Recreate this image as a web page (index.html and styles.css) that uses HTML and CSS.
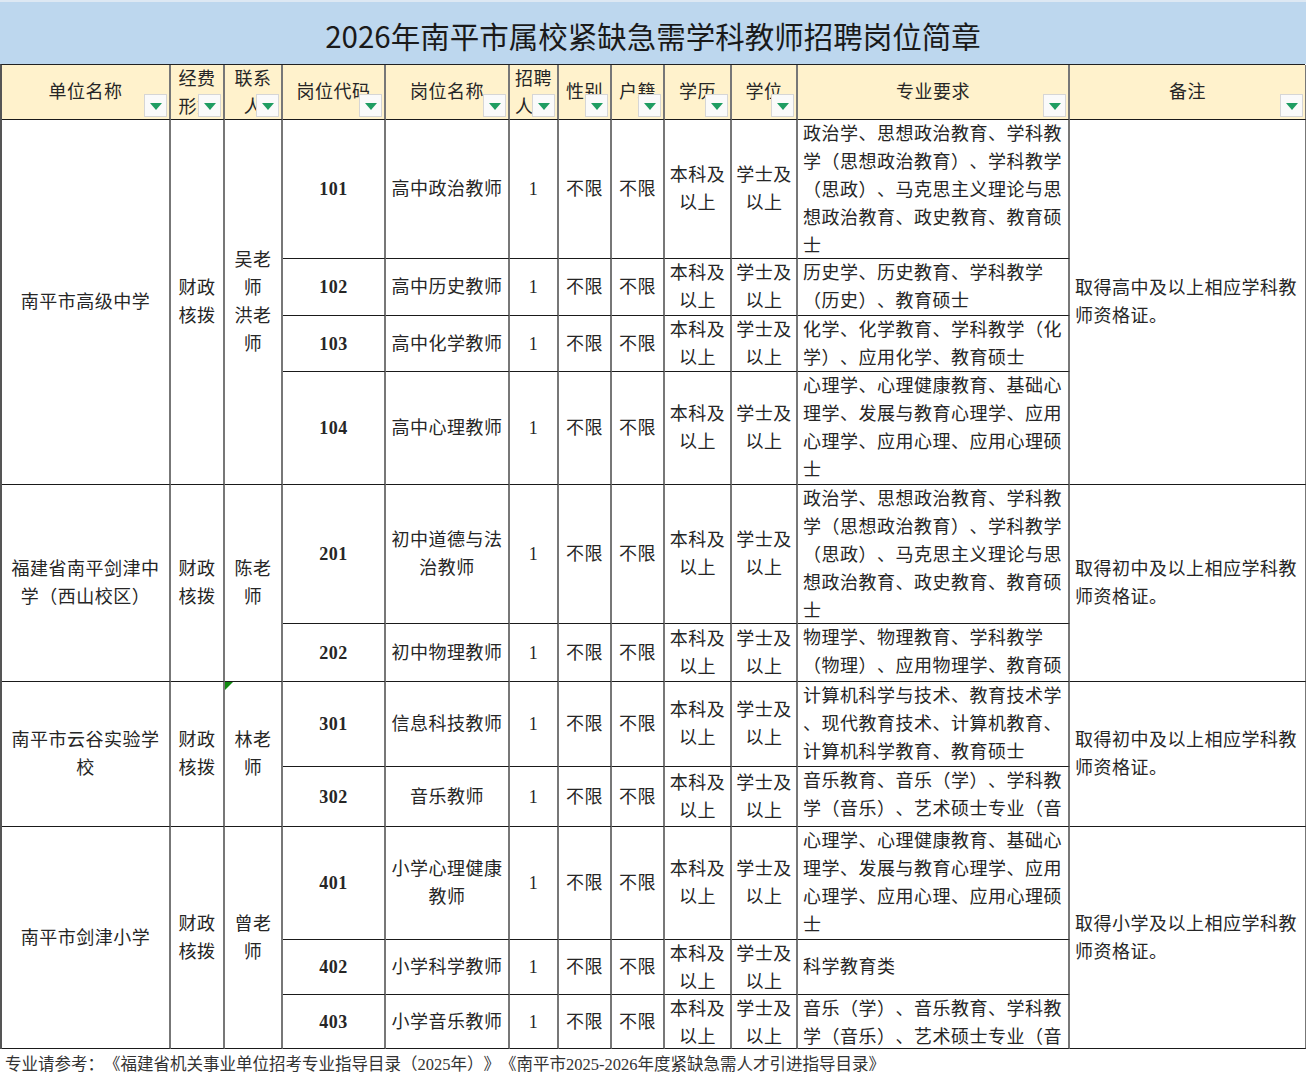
FILE: index.html
```html
<!DOCTYPE html>
<html lang="zh-CN">
<head>
<meta charset="utf-8">
<title>2026年南平市属校紧缺急需学科教师招聘岗位简章</title>
<link rel="stylesheet" href="styles.css">
</head>
<body>
<div class="sheet">
  <div class="title">2026年南平市属校紧缺急需学科教师招聘岗位简章</div>
  <div class="grid">
    <div class="c h"><span class="t">单位名称</span><i class="dd"></i></div>
    <div class="c h"><span class="t">经费形式</span><i class="dd"></i></div>
    <div class="c h"><span class="t">联系人</span><i class="dd"></i></div>
    <div class="c h"><span class="t">岗位代码</span><i class="dd"></i></div>
    <div class="c h"><span class="t">岗位名称</span><i class="dd"></i></div>
    <div class="c h"><span class="t">招聘人数</span><i class="dd"></i></div>
    <div class="c h"><span class="t">性别</span><i class="dd"></i></div>
    <div class="c h"><span class="t">户籍</span><i class="dd"></i></div>
    <div class="c h"><span class="t">学历</span><i class="dd"></i></div>
    <div class="c h"><span class="t">学位</span><i class="dd"></i></div>
    <div class="c h"><span class="t">专业要求</span><i class="dd"></i></div>
    <div class="c h"><span class="t">备注</span><i class="dd"></i></div>

    <!-- 南平市高级中学 -->
    <div class="c s4"><span class="t">南平市高级中学</span></div>
    <div class="c s4"><span class="t">财政核拨</span></div>
    <div class="c s4"><span class="t">吴老<br>师<br>洪老<br>师</span></div>
    <div class="c code"><span class="t">101</span></div>
    <div class="c"><span class="t">高中政治教师</span></div>
    <div class="c"><span class="t">1</span></div>
    <div class="c"><span class="t">不限</span></div>
    <div class="c"><span class="t">不限</span></div>
    <div class="c"><span class="t">本科及以上</span></div>
    <div class="c"><span class="t">学士及以上</span></div>
    <div class="c l"><span class="t">政治学、思想政治教育、学科教<br>学（思想政治教育）、学科教学<br>（思政）、马克思主义理论与思<br>想政治教育、政史教育、教育硕<br>士</span></div>
    <div class="c l s4"><span class="t">取得高中及以上相应学科教师资格证。</span></div>

    <div class="c code"><span class="t">102</span></div>
    <div class="c"><span class="t">高中历史教师</span></div>
    <div class="c"><span class="t">1</span></div>
    <div class="c"><span class="t">不限</span></div>
    <div class="c"><span class="t">不限</span></div>
    <div class="c"><span class="t">本科及以上</span></div>
    <div class="c"><span class="t">学士及以上</span></div>
    <div class="c l"><span class="t">历史学、历史教育、学科教学<br>（历史）、教育硕士</span></div>

    <div class="c code"><span class="t">103</span></div>
    <div class="c"><span class="t">高中化学教师</span></div>
    <div class="c"><span class="t">1</span></div>
    <div class="c"><span class="t">不限</span></div>
    <div class="c"><span class="t">不限</span></div>
    <div class="c"><span class="t">本科及以上</span></div>
    <div class="c"><span class="t">学士及以上</span></div>
    <div class="c l"><span class="t">化学、化学教育、学科教学（化<br>学）、应用化学、教育硕士</span></div>

    <div class="c code"><span class="t">104</span></div>
    <div class="c"><span class="t">高中心理教师</span></div>
    <div class="c"><span class="t">1</span></div>
    <div class="c"><span class="t">不限</span></div>
    <div class="c"><span class="t">不限</span></div>
    <div class="c"><span class="t">本科及以上</span></div>
    <div class="c"><span class="t">学士及以上</span></div>
    <div class="c l"><span class="t">心理学、心理健康教育、基础心<br>理学、发展与教育心理学、应用<br>心理学、应用心理、应用心理硕<br>士</span></div>

    <!-- 福建省南平剑津中学（西山校区） -->
    <div class="c s2"><span class="t">福建省南平剑津中学（西山校区）</span></div>
    <div class="c s2"><span class="t">财政核拨</span></div>
    <div class="c s2"><span class="t">陈老师</span></div>
    <div class="c code"><span class="t">201</span></div>
    <div class="c"><span class="t">初中道德与法治教师</span></div>
    <div class="c"><span class="t">1</span></div>
    <div class="c"><span class="t">不限</span></div>
    <div class="c"><span class="t">不限</span></div>
    <div class="c"><span class="t">本科及以上</span></div>
    <div class="c"><span class="t">学士及以上</span></div>
    <div class="c l"><span class="t">政治学、思想政治教育、学科教<br>学（思想政治教育）、学科教学<br>（思政）、马克思主义理论与思<br>想政治教育、政史教育、教育硕<br>士</span></div>
    <div class="c l s2"><span class="t">取得初中及以上相应学科教师资格证。</span></div>

    <div class="c code"><span class="t">202</span></div>
    <div class="c"><span class="t">初中物理教师</span></div>
    <div class="c"><span class="t">1</span></div>
    <div class="c"><span class="t">不限</span></div>
    <div class="c"><span class="t">不限</span></div>
    <div class="c"><span class="t">本科及以上</span></div>
    <div class="c"><span class="t">学士及以上</span></div>
    <div class="c l"><span class="t">物理学、物理教育、学科教学<br>（物理）、应用物理学、教育硕<br>士</span></div>

    <!-- 南平市云谷实验学校 -->
    <div class="c s2"><span class="t">南平市云谷实验学校</span></div>
    <div class="c s2"><span class="t">财政核拨</span></div>
    <div class="c s2 flag"><span class="t">林老师</span><i class="mark"></i></div>
    <div class="c code"><span class="t">301</span></div>
    <div class="c"><span class="t">信息科技教师</span></div>
    <div class="c"><span class="t">1</span></div>
    <div class="c"><span class="t">不限</span></div>
    <div class="c"><span class="t">不限</span></div>
    <div class="c"><span class="t">本科及以上</span></div>
    <div class="c"><span class="t">学士及以上</span></div>
    <div class="c l"><span class="t">计算机科学与技术、教育技术学<br>、现代教育技术、计算机教育、<br>计算机科学教育、教育硕士</span></div>
    <div class="c l s2"><span class="t">取得初中及以上相应学科教师资格证。</span></div>

    <div class="c code"><span class="t">302</span></div>
    <div class="c"><span class="t">音乐教师</span></div>
    <div class="c"><span class="t">1</span></div>
    <div class="c"><span class="t">不限</span></div>
    <div class="c"><span class="t">不限</span></div>
    <div class="c"><span class="t">本科及以上</span></div>
    <div class="c"><span class="t">学士及以上</span></div>
    <div class="c l"><span class="t">音乐教育、音乐（学）、学科教<br>学（音乐）、艺术硕士专业（音<br>乐）、教育硕士</span></div>

    <!-- 南平市剑津小学 -->
    <div class="c s3"><span class="t">南平市剑津小学</span></div>
    <div class="c s3"><span class="t">财政核拨</span></div>
    <div class="c s3"><span class="t">曾老师</span></div>
    <div class="c code"><span class="t">401</span></div>
    <div class="c"><span class="t">小学心理健康教师</span></div>
    <div class="c"><span class="t">1</span></div>
    <div class="c"><span class="t">不限</span></div>
    <div class="c"><span class="t">不限</span></div>
    <div class="c"><span class="t">本科及以上</span></div>
    <div class="c"><span class="t">学士及以上</span></div>
    <div class="c l"><span class="t">心理学、心理健康教育、基础心<br>理学、发展与教育心理学、应用<br>心理学、应用心理、应用心理硕<br>士</span></div>
    <div class="c l s3"><span class="t">取得小学及以上相应学科教师资格证。</span></div>

    <div class="c code"><span class="t">402</span></div>
    <div class="c"><span class="t">小学科学教师</span></div>
    <div class="c"><span class="t">1</span></div>
    <div class="c"><span class="t">不限</span></div>
    <div class="c"><span class="t">不限</span></div>
    <div class="c"><span class="t">本科及以上</span></div>
    <div class="c"><span class="t">学士及以上</span></div>
    <div class="c l"><span class="t">科学教育类</span></div>

    <div class="c code"><span class="t">403</span></div>
    <div class="c"><span class="t">小学音乐教师</span></div>
    <div class="c"><span class="t">1</span></div>
    <div class="c"><span class="t">不限</span></div>
    <div class="c"><span class="t">不限</span></div>
    <div class="c"><span class="t">本科及以上</span></div>
    <div class="c"><span class="t">学士及以上</span></div>
    <div class="c l"><span class="t">音乐（学）、音乐教育、学科教<br>学（音乐）、艺术硕士专业（音<br>乐）、教育硕士</span></div>
  </div>
  <div class="note">专业请参考：《福建省机关事业单位招考专业指导目录（2025年）》《南平市2025-2026年度紧缺急需人才引进指导目录》</div>
</div>
</body>
</html>
```

FILE: styles.css
```css
html, body {
  margin: 0;
  padding: 0;
  background: #ffffff;
}

.sheet {
  width: 1306px;
  font-family: "Liberation Serif", "Noto Sans CJK SC", serif;
  color: #262626;
  text-spacing-trim: space-all;
}

.title {
  box-sizing: border-box;
  height: 64px;
  padding-top: 4px;
  background: #bdd7ee;
  border-top: 2px solid #dde8f3;
  display: flex;
  align-items: center;
  justify-content: center;
  font-family: "Noto Sans CJK SC", sans-serif;
  font-size: 29.5px;
  color: #1a1a1a;
}

.grid {
  display: grid;
  grid-template-columns: 169px 54px 58px 103px 124px 49px 53px 53px 67px 66px 272px 237px;
  grid-template-rows: 55px 139px 57px 56px 113px 139px 58px 85px 60px 113px 55px 54px;
  border-top: 1px solid #222;
  border-left: 2px solid #555;
  width: 1305px;
  box-sizing: border-box;
}

.c {
  box-sizing: border-box;
  border-right: 2px solid #777;
  border-bottom: 1px solid #1a1a1a;
  display: flex;
  flex-direction: column;
  justify-content: safe center;
  overflow: hidden;
  padding: 0 3px;
  font-size: 18px;
  line-height: 28px;
  letter-spacing: 0.5px;
  text-align: center;
  position: relative;
}

.c .t {
  display: block;
}

.h {
  background: #fff2cc;
}

.l {
  text-align: left;
  padding-left: 5px;
  padding-right: 0;
}

.l .t {
  white-space: nowrap;
}

.s2 .t,
.s3 .t,
.s4 .t {
  white-space: normal;
}

.code {
  font-weight: bold;
}

.s2 { grid-row: span 2; }
.s3 { grid-row: span 3; }
.s4 { grid-row: span 4; }

.dd {
  position: absolute;
  right: 2px;
  bottom: 2px;
  width: 23px;
  height: 23px;
  box-sizing: border-box;
  background: #fafafa;
  border: 1px solid #d6d6d6;
  display: flex;
  align-items: center;
  justify-content: center;
}

.dd::after {
  content: "";
  width: 0;
  height: 0;
  border-left: 6px solid transparent;
  border-right: 6px solid transparent;
  border-top: 7px solid #1f9d62;
  margin-top: 2px;
}

.mark {
  position: absolute;
  left: 0;
  top: 0;
  width: 0;
  height: 0;
  border-top: 8px solid #118a11;
  border-right: 8px solid transparent;
}

.note {
  height: 31px;
  line-height: 31px;
  padding-left: 5px;
  font-size: 16.5px;
  color: #333;
  white-space: nowrap;
}
```
